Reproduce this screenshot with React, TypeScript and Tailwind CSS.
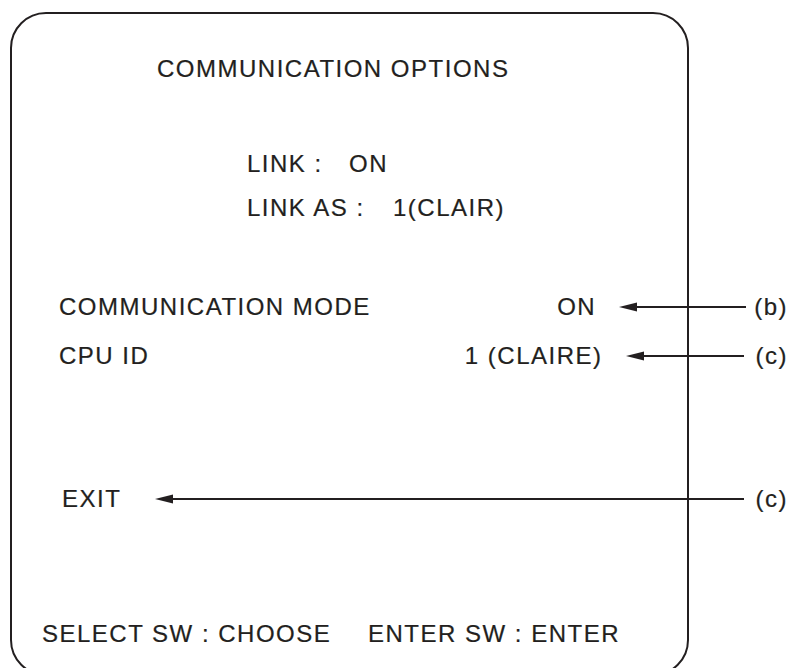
import React from "react";

function Arrow({ className }: { className: string }) {
  return (
    <div className={"flex items-center " + className}>
      <svg width="18" height="10" viewBox="0 0 18 10" className="shrink-0">
        <polygon points="0,5 18,0.5 18,9.5" fill="#231f20" />
      </svg>
      <div className="h-[2px] flex-1 bg-[#231f20]" />
    </div>
  );
}

export default function App() {
  return (
    <div
      className="relative w-[788px] h-[668px] overflow-hidden bg-white text-[#231f20] text-[24px] leading-[28px] tracking-[1.5px] [-webkit-text-stroke:0.2px_#231f20]"
      style={{ fontFamily: '"Liberation Sans", Arial, sans-serif' }}
    >
      <div className="ml-[10px] mt-[12px] w-[679px] h-[664px] border-2 border-[#231f20] rounded-[36px] pt-[41px] flex flex-col">
        <div className="pl-[145px] whitespace-pre">COMMUNICATION OPTIONS</div>

        <div className="pl-[235px] mt-[67px] flex whitespace-pre">
          <span className="w-[102px]">LINK :</span>
          <span>ON</span>
        </div>
        <div className="pl-[235px] mt-[16px] flex whitespace-pre">
          <span className="w-[146px]">LINK AS :</span>
          <span>1(CLAIR)</span>
        </div>

        <div className="mt-[71px] mr-[-101px] pl-[47px] flex items-center whitespace-pre">
          <span className="flex-1">COMMUNICATION MODE</span>
          <span>ON</span>
          <Arrow className="ml-[23px] w-[127px]" />
          <span className="ml-[8px]">(b)</span>
        </div>
        <div className="mt-[21px] mr-[-101px] pl-[47px] flex items-center whitespace-pre">
          <span className="flex-1">CPU ID</span>
          <span>1 (CLAIRE)</span>
          <Arrow className="ml-[23px] w-[118px]" />
          <span className="ml-[12px]">(c)</span>
        </div>

        <div className="mt-[115px] mr-[-101px] pl-[50px] flex items-center whitespace-pre">
          <span>EXIT</span>
          <Arrow className="ml-[34px] flex-1" />
          <span className="ml-[12px]">(c)</span>
        </div>

        <div className="mt-[107px] pl-[30px] flex whitespace-pre">
          <span className="w-[326px]">SELECT SW : CHOOSE</span>
          <span>ENTER SW : ENTER</span>
        </div>
      </div>
    </div>
  );
}
